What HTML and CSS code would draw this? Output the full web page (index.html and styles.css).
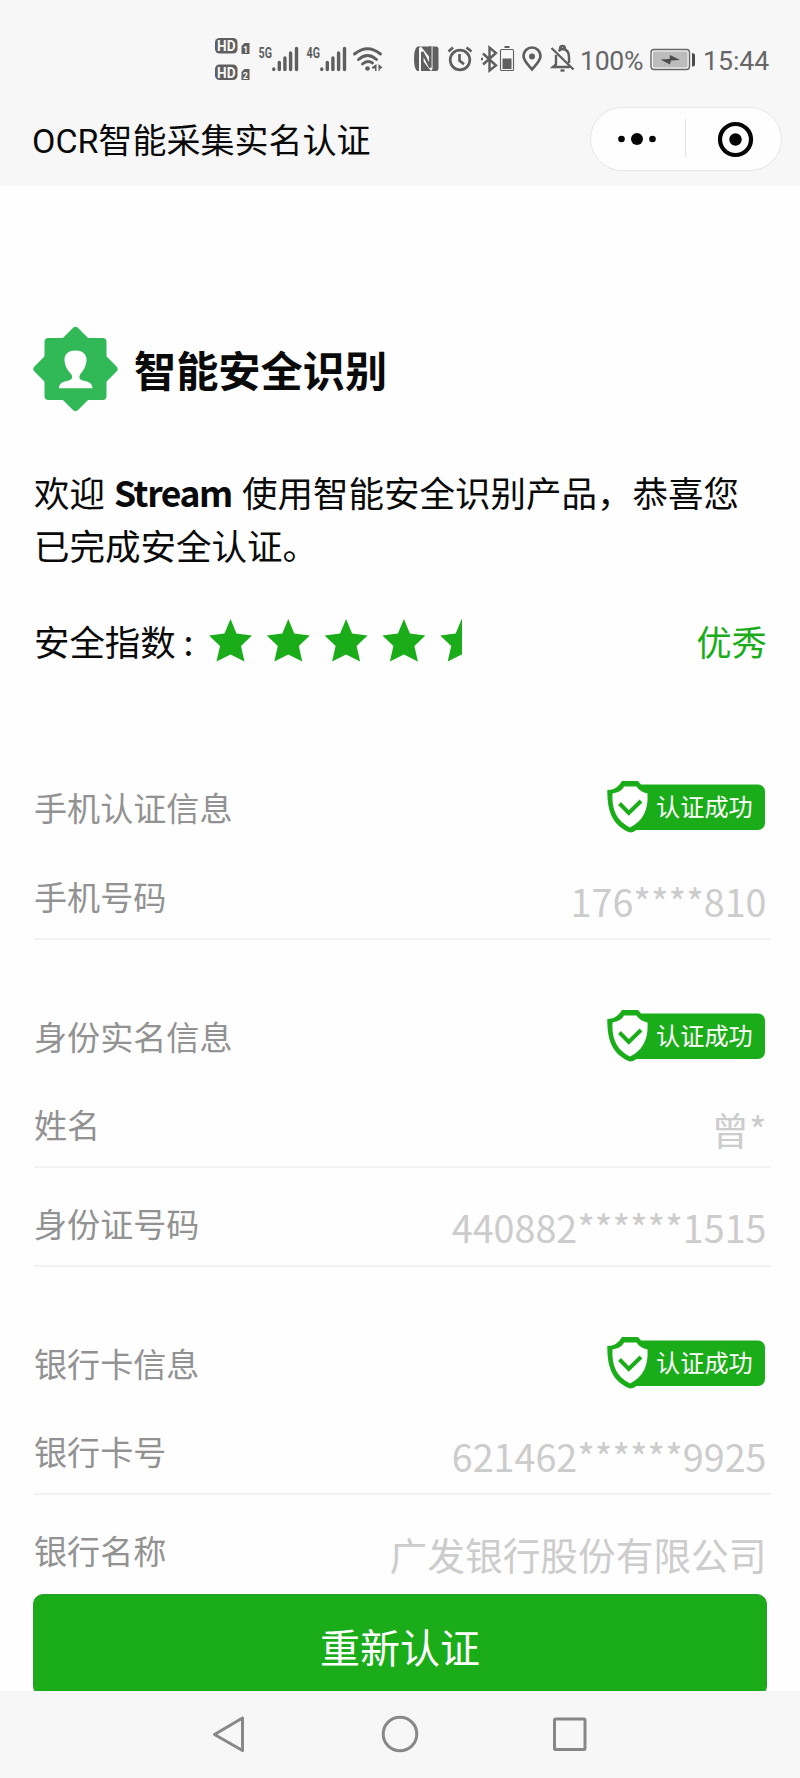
FILE: index.html
```html
<!DOCTYPE html>
<html lang="zh-CN">
<head>
<meta charset="utf-8">
<title>OCR智能采集实名认证</title>
<link rel="stylesheet" href="styles.css">
</head>
<body>
<svg class="defs" width="0" height="0" aria-hidden="true">
  <defs>
    <path id="star" d="M21.500 0L27.500 14.500 43 16.500 32 27 35.500 42.500 21.500 35.500 7.500 42.500 11 27 0 16.500 15.500 14.500Z"/>
    <g id="shield">
      <path fill="#1aad19" d="M12.500 3.500L15 0H31L34 3.500H151a7 7 0 0 1 7 7V42a7 7 0 0 1-7 7H29.500Q26 51.500 23 51.500 20 51 16 48C5 41 0 29 .300 9Q8 9 12.500 3.500Z"/>
      <path fill="#fff" d="M17 5.500H29.500Q33 11 40.500 12.500C41.500 29 36 40 23 46.500 10 40 4.500 29 5.500 12.500 11 11.500 15 9.500 17 5.500Z"/>
      <path fill="none" stroke="#1aad19" stroke-width="4" d="M12.500 22.500L21.800 32 34 20"/>
    </g>
  </defs>
</svg>
<div class="screen">
  <header class="top">
    <div class="status">
      <svg class="status-signal" width="190" height="60" viewBox="210 30 190 60" fill="#5f5f5f">
        <rect x="215" y="38" width="22.500" height="15.500" rx="4.500"/>
        <text class="hd" x="217" y="51" textLength="18.500" lengthAdjust="spacingAndGlyphs">HD</text>
        <path d="M241.500 46l3-3h5v11h-8z"/>
        <text class="sim" x="243" y="52.500">1</text>
        <rect x="215" y="64.500" width="22.500" height="15.500" rx="4.500"/>
        <text class="hd" x="217" y="77.500" textLength="18.500" lengthAdjust="spacingAndGlyphs">HD</text>
        <path d="M241.500 72l3-3h5v11h-8z"/>
        <text class="sim" x="242.800" y="78.500">2</text>
        <text class="net" x="258.500" y="57.500" textLength="13.500" lengthAdjust="spacingAndGlyphs">5G</text>
        <text class="net" x="306.500" y="57.500" textLength="13.500" lengthAdjust="spacingAndGlyphs">4G</text>
        <g stroke="#5f5f5f" stroke-width="3.400" stroke-linecap="round">
          <path d="M273.800 69v.5M279.300 62.500v7M284.900 58v11.500M290.600 53v16.500M296.500 48.500v21M321.800 69v.5M327.300 62.500v7M332.900 58v11.500M338.600 53v16.500M344.500 48.500v21"/>
        </g>
        <g fill="none" stroke="#5f5f5f" stroke-width="2.900" stroke-linecap="round">
          <path d="M354.500 54Q367.500 43.500 380.500 54M358.500 59.500Q367.500 51.500 376.500 59.500M362.500 64Q367.500 59.500 372.500 63"/>
        </g>
        <circle cx="367.500" cy="68.500" r="2.300"/>
        <path d="M376.500 64v7h-1.500v-2.500h-3V67zM378.500 64l4 3.500-3 2v1.500h-1z"/>
      </svg>
      <svg class="status-icons" width="180" height="50" viewBox="400 35 180 50" fill="none" stroke="#5f5f5f" stroke-width="2.400">
        <path fill="#5f5f5f" stroke="none" d="M417.500 46.500H436q2.500 0 2.500 3v18.500q0 3-2.500 3H417.500q-3.500-1.500-3.500-12t3.500-12.500z"/>
        <path fill="#f7f7f7" stroke="none" d="M419 48l2-1.500L431 59V46.500h1.500V69l-1.500 2L421 58.500V71h-2z"/>
        <path stroke-width="2.600" d="M422.300 71V52L430.300 67.500V46.500"/>
        <circle cx="460" cy="60" r="9.800" stroke-width="2.700"/>
        <path stroke-width="2.700" d="M459.500 54v6.500l4.500 3.800M448.500 51.500l4.500-4M466.500 47.500l5 4"/>
        <path d="M483 53.500l13 12-6.500 5V47.500l6.500 5.500-13 11.500M481 59h2"/>
        <path stroke-width="1.100" d="M501.500 49.500h11q1 0 1 1v19q0 1-1 1h-11q-1 0-1-1v-19q0-1 1-1z"/>
        <path fill="#5f5f5f" stroke="none" d="M502.500 58.500h9v10.500h-9zM504.500 46h5v2h-5z"/>
        <path stroke-width="2.700" d="M532 69.500c-5-6-8.500-9-8.500-13.500a8.500 8.500 0 0 1 17 0c0 4.500-3.500 7.500-8.500 13.500z"/>
        <circle cx="532" cy="56.500" r="3" fill="#5f5f5f" stroke="none"/>
        <path d="M551.500 48l22 21.500M556 55v9.500l-3 2.500h17M558.500 51q2.500-2 4-2 6.500.5 6.500 8v6M560 49q0-3 2.500-3t2.500 3"/>
        <path d="M560.500 70.500h4"/>
      </svg>
      <span class="pct">100%</span>
      <svg class="battery" width="46" height="24" viewBox="650 48 46 24">
        <rect x="651" y="49.500" width="38.500" height="20" rx="3" fill="#f7f7f7" stroke="#666" stroke-width="1.400"/>
        <rect x="653" y="51.500" width="34.500" height="16" rx="1" fill="#bcbcbc"/>
        <path fill="#4c4c4c" d="M660.500 59.500l9-.5.500-4 10 5-9 .5-1 4zM692 53q3 0 3 2.500v9q0 2-3 2z"/>
      </svg>
      <span class="clock">15:44</span>
    </div>
    <div class="titlebar">
      <h1 class="page-title">OCR智能采集实名认证</h1>
      <div class="capsule">
        <svg width="190" height="62" viewBox="591 108 190 62" fill="#050505">
          <circle cx="621.500" cy="139" r="3.300"/>
          <circle cx="637" cy="139" r="6"/>
          <circle cx="652.500" cy="139" r="3.300"/>
          <path d="M685 119h1v38h-1z" fill="#e2e2e2"/>
          <circle cx="735.500" cy="139.500" r="15.500" fill="none" stroke="#050505" stroke-width="4.200"/>
          <circle cx="735.500" cy="139.500" r="6.200"/>
        </svg>
      </div>
    </div>
  </header>

  <main class="content">
    <div class="brand">
      <svg width="86" height="86" viewBox="0.500 0 86 86">
        <g fill="#31b857" stroke="#31b857" stroke-width="8" stroke-linejoin="round">
          <path d="M16 16H70V70H16z"/>
          <path d="M43 5L81 43 43 81 5 43z"/>
        </g>
        <path fill="#fff" d="M43 24.500c8 0 11.500 4.500 11 10.500-.500 5-3 10-6.500 13.500-1.500 4 0 5.500 4 6.200 5.500 1 8.500 3.300 8.500 7.500H26.500c0-4.200 3-6.500 8.500-7.500 4-.7 5.500-2.200 4-6.200C35 45 32.500 40 32 35c-.500-6 3-10.500 11-10.500z"/>
      </svg>
      <h2 class="brand-name">智能安全识别</h2>
    </div>
    <p class="welcome">欢迎 <b>Stream</b> 使用智能安全识别产品，恭喜您<br>已完成安全认证。</p>
    <div class="rating">
      <span class="rating-label">安全指数 :</span>
      <svg width="253" height="43" viewBox="0 0 253 43" fill="#1aad19">
        <use href="#star"/>
        <use href="#star" x="57.800"/>
        <use href="#star" x="115.600"/>
        <use href="#star" x="173.400"/>
        <use href="#star" x="231.200"/>
      </svg>
      <span class="rating-grade">优秀</span>
    </div>

    <section class="group">
      <div class="group-head">
        <h3>手机认证信息</h3>
        <div class="badge"><svg width="158" height="52"><use href="#shield"/></svg><span>认证成功</span></div>
      </div>
      <div class="row"><span class="label">手机号码</span><span class="value">176****810</span></div>
    </section>
    <section class="group">
      <div class="group-head">
        <h3>身份实名信息</h3>
        <div class="badge"><svg width="158" height="52"><use href="#shield"/></svg><span>认证成功</span></div>
      </div>
      <div class="row"><span class="label">姓名</span><span class="value">曾*</span></div>
      <div class="row"><span class="label">身份证号码</span><span class="value">440882******1515</span></div>
    </section>
    <section class="group">
      <div class="group-head">
        <h3>银行卡信息</h3>
        <div class="badge"><svg width="158" height="52"><use href="#shield"/></svg><span>认证成功</span></div>
      </div>
      <div class="row"><span class="label">银行卡号</span><span class="value">621462******9925</span></div>
      <div class="row last"><span class="label">银行名称</span><span class="value">广发银行股份有限公司</span></div>
    </section>
    <button class="retry" type="button">重新认证</button>
  </main>

  <nav class="navbar">
    <svg width="36" height="40" viewBox="211 1714 36 40"><path d="M242.500 1718V1750.500L214.500 1734.500Z"/></svg>
    <svg width="40" height="40" viewBox="380 1714 40 40"><circle cx="400" cy="1734" r="16.800"/></svg>
    <svg width="36" height="40" viewBox="552 1714 36 40"><rect x="554.500" y="1719" width="30.500" height="30.500" rx="1"/></svg>
  </nav>
</div>
</body>
</html>
```

FILE: styles.css
```css
* { box-sizing: border-box; }

body {
  margin: 0;
  background: #fefefe;
  font-family: "Noto Sans CJK SC", sans-serif;
  color: #0a0a0a;
}

h1, h2, h3, p { margin: 0; font-weight: 400; }
svg { display: block; flex: none; }
.defs { position: absolute; }

.screen {
  display: flex;
  flex-direction: column;
  width: 800px;
  height: 1778px;
  overflow: hidden;
}

.top { flex: none; height: 186px; background: #f7f7f7; }

.status {
  display: flex;
  align-items: center;
  height: 90px;
  padding: 30px 0 0 210px;
  font-family: Roboto, sans-serif;
  font-size: 26.6px;
  line-height: 63px;
  color: #666;
}
.pct { width: 70px; letter-spacing: -0.3px; white-space: nowrap; }
.battery { margin-right: 7px; }
.clock { white-space: nowrap; }
.hd { font: bold 15px Roboto, sans-serif; fill: #f7f7f7; }
.sim { font: bold 9px Roboto, sans-serif; fill: #f7f7f7; }
.net { font: bold 15.5px Roboto, sans-serif; fill: #5f5f5f; }

.titlebar {
  display: flex;
  justify-content: space-between;
  align-items: center;
  height: 98px;
  padding: 0 18px 0 32px;
}
.page-title {
  padding-top: 3px;
  font: 400 34px/50px Roboto, "Noto Sans CJK SC", sans-serif;
}
.capsule {
  width: 192px;
  height: 64px;
  border: 1px solid #e6e6e6;
  border-radius: 32px;
  background: #fefefe;
}

.content {
  flex: none;
  height: 1505px;
  padding: 140px 33px 0;
  overflow: hidden;
}

.brand { display: flex; align-items: center; height: 86px; gap: 15px; }
.brand-name { font-size: 42.2px; font-weight: 700; line-height: 60px; }

.welcome {
  height: 106px;
  margin-top: 53px;
  padding-left: 1px;
  font-size: 35.5px;
  line-height: 53px;
  white-space: nowrap;
}
.welcome b { margin: 0 2px 0 1px; letter-spacing: -1.4px; }

.rating {
  display: flex;
  align-items: center;
  height: 60px;
  margin-top: 39px;
  padding: 0 0 0 1px;
  font-size: 35.4px;
}
.rating svg { margin-top: 1px; }
.rating-label { width: 174.500px; white-space: pre; }
.rating-grade { margin-left: auto; color: #1aad19; }

.group { padding-left: 1px; }
.rating + .group { margin-top: 42px; }

.group-head {
  display: flex;
  justify-content: space-between;
  height: 129.5px;
  padding-top: 69px;
}
.group-head h3, .label {
  font-size: 33.1px;
  line-height: 56px;
  color: #929292;
}
.group-head h3 { margin-top: -2px; }
.group + .group h3 { margin-top: -1px; }
.group + .group .badge { margin-top: 0.6px; }

.badge { display: grid; height: 52px; margin-right: 2px; }
.badge svg, .badge span { grid-area: 1 / 1; }
.badge span {
  padding-left: 49px;
  font-size: 24.2px;
  line-height: 50px;
  color: #fff;
}

.row {
  display: flex;
  justify-content: space-between;
  width: 737px;
  height: 98.7px;
  padding: 26.5px 4.5px 0 0;
  border-bottom: 2px solid #f3f3f3;
}
.row.last { height: 98.5px; border: 0; }
.value {
  padding-top: 4.5px;
  font-size: 37.7px;
  line-height: 56px;
  color: #ccc;
}

.retry {
  display: block;
  width: 734px;
  height: 102px;
  padding: 0;
  border: 1px solid #2c9a2c;
  border-radius: 10px;
  background: #1aad19;
  font: 400 40px/102px "Noto Sans CJK SC", sans-serif;
  color: #fff;
}

.navbar {
  display: flex;
  flex: none;
  height: 87px;
  padding: 23px 0 0 211px;
  background: #f7f7f7;
}
.navbar svg { fill: none; stroke: #888; stroke-width: 3; stroke-linejoin: round; }
.navbar svg + svg { margin-left: 133px; }
.navbar svg:last-child { margin-left: 132px; }
```
